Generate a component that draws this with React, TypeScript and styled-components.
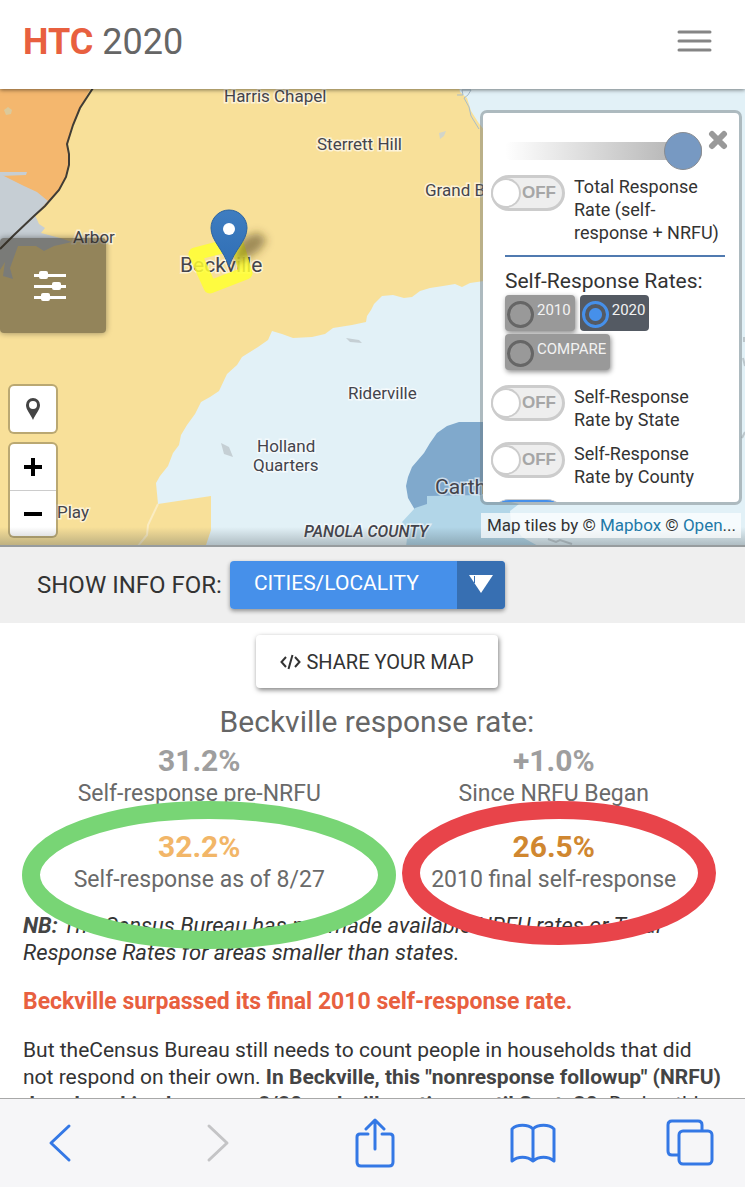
import React from "react";
import styled, { createGlobalStyle } from "styled-components";

const GlobalStyle = createGlobalStyle`
  *, *::before, *::after { box-sizing: border-box; }
  body { margin: 0; background: #fff; font-family: Roboto, "Liberation Sans", sans-serif; color: #333; }
  button, input, select { font: inherit; color: inherit; margin: 0; }
`;

const Page = styled.div`
  display: flex;
  flex-direction: column;
  height: 100vh;
  overflow: hidden;
`;

const Header = styled.header`
  display: flex;
  flex: none;
  align-items: center;
  justify-content: space-between;
  height: 89px;
  padding: 0 33px 6px 23px;
  background: #fff;
  box-shadow: 0 1px 4px rgba(0, 0, 0, 0.5);
  position: relative;
  z-index: 3;
`;

const Brand = styled.a`
  font-size: 36px;
  line-height: 40px;
  color: #666;
  text-decoration: none;
  strong { color: #e8603f; font-weight: 700; }
`;

const PlainButton = styled.button`
  display: flex;
  align-items: center;
  justify-content: center;
  padding: 0;
  border: 0;
  background: none;
  svg { display: block; }
`;

const MapArea = styled.section`
  position: relative;
  flex: none;
  height: 458px;
  overflow: hidden;
  background: #e2f1f7;
  border-bottom: 2px solid #979c9e;
`;

const MapCanvas = styled.svg`
  display: block;
  width: 100%;
  height: 100%;
  text { font-family: Roboto, "Liberation Sans", sans-serif; fill: #44444c; stroke: #fff; stroke-opacity: 0.6; stroke-width: 3px; paint-order: stroke; }
`;

const MapShade = styled.div`
  position: absolute;
  inset: auto 0 0 0;
  height: 18px;
  background: linear-gradient(rgba(60, 70, 75, 0), rgba(60, 70, 75, 0.3));
  pointer-events: none;
`;

const FilterButton = styled(PlainButton)`
  position: absolute;
  left: 0;
  top: 149px;
  width: 106px;
  height: 95px;
  padding-right: 6px;
  border-radius: 4px;
  background: rgba(46, 40, 27, 0.5);
  box-shadow: 0 0 6px rgba(0, 0, 0, 0.4);
`;

const MapControls = styled.div`
  position: absolute;
  left: 8px;
  top: 295px;
  display: flex;
  flex-direction: column;
  gap: 8px;
`;

const ControlGroup = styled.div`
  display: flex;
  flex-direction: column;
  width: 50px;
  border: 2px solid rgba(0, 0, 0, 0.25);
  border-radius: 6px;
  background: #fff;
  background-clip: padding-box;
`;

const ControlButton = styled(PlainButton)`
  height: 46px;
  & + & { border-top: 1px solid #ccc; }
`;

const Attribution = styled.div`
  position: absolute;
  right: 4px;
  bottom: 7px;
  width: 260px;
  padding: 0 6px;
  background: rgba(255, 255, 255, 0.7);
  font-size: 17px;
  line-height: 25px;
  white-space: nowrap;
  a { color: #2279a8; text-decoration: none; }
`;

const Panel = styled.aside`
  position: absolute;
  top: 21px;
  right: 3px;
  width: 262px;
  height: 395px;
  padding: 0 14px 0 22px;
  overflow: hidden;
  border: 3px solid rgba(100, 110, 115, 0.42);
  border-radius: 7px;
  background: #fff;
  background-clip: padding-box;
`;

const PanelTop = styled.div`
  display: flex;
  align-items: flex-start;
  gap: 6px;
  padding: 17px 0 5px;
  margin-right: -3px;
`;

const Opacity = styled.input`
  appearance: none;
  flex: 1;
  min-width: 0;
  height: 38px;
  margin-top: 2px;
  background: none;
  &::-webkit-slider-runnable-track {
    height: 18px;
    border-radius: 6px;
    background: linear-gradient(90deg, #fff, #aaa);
  }
  &::-webkit-slider-thumb {
    appearance: none;
    width: 38px;
    height: 38px;
    margin-top: -10px;
    border: 1px solid #888c92;
    border-radius: 50%;
    background: #7799c2;
  }
`;

const LayerRow = styled.label`
  display: flex;
  align-items: flex-start;
  gap: 9px;
  margin-left: -14px;
  padding-bottom: 11px;
  font-size: 18px;
  line-height: 23px;
`;

const LayerName = styled.span`
  white-space: pre-line;
`;

const Switch = styled.span`
  position: relative;
  flex: none;
  width: 74px;
  height: 36px;
  color: #a6a6a6;
  font-family: "Liberation Sans", Arial, sans-serif;
  font-size: 17px;
  font-weight: 700;
  line-height: 35px;
  input {
    appearance: none;
    position: absolute;
    inset: 0;
    border: 3px solid #ccc;
    border-radius: 18px;
    background: #eee;
  }
  input::before {
    content: "";
    position: absolute;
    left: -1px;
    top: 2px;
    width: 26px;
    height: 26px;
    border-radius: 50%;
    background: #fff;
    box-shadow: 0 0 0 2px #ccc;
  }
  input:checked { border-width: 1px; background: #4690ea; }
  input:checked::before { left: 43px; top: 4px; }
  span { position: absolute; left: 31px; }
`;

const Rule = styled.hr`
  margin: 0 0 11px;
  border: 0;
  border-top: 2px solid #507ab0;
`;

const YearSet = styled.fieldset`
  display: flex;
  flex-wrap: wrap;
  gap: 3px 5px;
  margin: 0 -10px 15px 0;
  padding: 0;
  border: 0;
  legend { padding: 0; font-size: 21px; line-height: 27px; }
`;

const YearOption = styled.label`
  display: flex;
  gap: 3px;
  height: 36px;
  padding: 5px 4px 0 2px;
  border-radius: 4px;
  background: #999;
  color: #f2f2f2;
  font-size: 15px;
  line-height: 20px;
  box-shadow: 1px 2px 5px rgba(0, 0, 0, 0.45);
  input {
    appearance: none;
    width: 27px;
    height: 27px;
    margin-top: 1px;
    border: 3px solid #666;
    border-radius: 50%;
  }
  &:has(:checked) { background: #545a63; box-shadow: none; }
  input:checked { border-color: #4690ea; background: radial-gradient(circle, #4690ea 6px, transparent 7px); }
`;

const InfoBar = styled.form`
  display: flex;
  flex: none;
  align-items: center;
  gap: 8px;
  height: 76px;
  padding-left: 37px;
  background: #efefef;
  label { font-size: 24px; line-height: 30px; }
`;

const SelectBox = styled.div`
  position: relative;
  display: flex;
  width: 275px;
  height: 48px;
  border-radius: 4px;
  overflow: hidden;
  background: #4690ea;
  color: #fff;
  select {
    appearance: none;
    width: 100%;
    padding: 0 54px 4px 24px;
    border: 0;
    background: none;
    font-size: 21px;
  }
  svg { position: absolute; right: 0; top: 0; pointer-events: none; }
`;

const SelectShadow = styled.div`
  border-radius: 4px;
  box-shadow: 0 2px 4px rgba(0, 0, 0, 0.4);
`;

const Content = styled.main`
  display: flex;
  flex: 1;
  flex-direction: column;
  min-height: 0;
  overflow: hidden;
  padding: 12px 14px 0 23px;
`;

const ShareButton = styled.button`
  display: flex;
  align-items: center;
  align-self: center;
  flex: none;
  gap: 5px;
  height: 53px;
  padding: 0 24px;
  border: 0;
  border-radius: 4px;
  background: #fff;
  box-shadow: 1px 2px 5px rgba(0, 0, 0, 0.5);
  font-size: 20px;
`;

const Title = styled.h1`
  margin: 16px 0 4px;
  font-size: 30px;
  line-height: 36px;
  font-weight: 400;
  text-align: center;
  color: #666;
`;

const Stats = styled.dl`
  display: grid;
  grid-template-columns: 1fr 1fr;
  row-gap: 20px;
  margin: 0 0 16px -1px;
  text-align: center;
`;

const Stat = styled.div`
  position: relative;
  display: flex;
  flex-direction: column-reverse;
`;

const StatValue = styled.dd<{ $tone: string }>`
  margin: 0;
  color: ${(p) => p.$tone};
  font-size: 30px;
  font-weight: 700;
  line-height: 34px;
`;

const StatLabel = styled.dt`
  color: #6a6a6a;
  font-size: 23px;
  line-height: 32px;
`;

const Ring = styled.svg<{ $left: number }>`
  position: absolute;
  z-index: 2;
  left: ${(p) => p.$left}px;
  top: -29px;
  pointer-events: none;
`;

const Text = styled.p`
  margin: 0 0 22px;
  font-size: 21px;
  line-height: 27px;
  color: #333;
  b { color: #444; }
`;

const Note = styled(Text)`
  font-size: 22px;
  font-style: italic;
`;

const Highlight = styled(Text)`
  color: #e8603f;
  font-size: 23px;
  font-weight: 700;
`;

const Toolbar = styled.nav`
  display: flex;
  flex: none;
  justify-content: space-between;
  height: 89px;
  padding: 16px 31px 0 36px;
  border-top: 1px solid #a8a8a8;
  background: #f6f6f8;
  position: relative;
  z-index: 3;
`;

const ToolButton = styled(PlainButton)`
  width: 48px;
  height: 55px;
  color: #3478e5;
  &:disabled { color: #c4c4c6; }
`;

function LayerToggle({ name, on }: { name: string; on?: boolean }) {
  return (
    <LayerRow>
      <Switch>
        <input type="checkbox" defaultChecked={on} />
        {!on && <span>OFF</span>}
      </Switch>
      <LayerName>{name}</LayerName>
    </LayerRow>
  );
}

function CountyMap() {
  return (
    <MapCanvas viewBox="0 89 745 456" preserveAspectRatio="xMinYMin slice" role="img" aria-label="Map of Panola County">
      <path
        fill="#f8e099"
        d="M0 80H458L460 92 467 98 471 111 478 122 484 130V281L470 283 462 287 455 284 443 286 430 288 420 291 412 297 404 298 393 295 382 296 374 304 371 310 367 316 366 322 352 325 333 328 325 334 312 337 293 338 282 334 272 331 268 340 258 347 242 357 237 365 227 374 219 391 210 397 201 402 195 414 187 425 181 435 179 445 173 453 168 466 160 476 156 483 158 504 211 496 211 530 205 548H0Z"
      />
      <path fill="none" stroke="#fff" strokeOpacity=".4" strokeWidth="2" d="M158 504 148 525 147 535 138 546" />
      <path fill="#f4b76e" d="M0 80H95L80 108 73 125 68 145 69 165 66 178 58 192 34 216 0 240Z" />
      <path fill="#c6ced4" d="M0 174 12 180 24 186 37 192 48 201 35 215 39 224 45 228 41 233 60 238 72 242 54 246 44 251 36 246 18 246 14 257 10 268 13 279 3 276 5 262 0 270Z" />
      <path fill="#c6ced4" d="M0 172 27 172 26 175 0 176Z" />
      <path fill="#dcc99a" d="M4 110l4-3 4 3-1 4-5 1Z" />
      <path fill="none" stroke="#403c35" strokeWidth="2" d="M93 88 80 108 73 125 67 144 69 154 69 165 66 177 59 190 45 206 34 216 14 235 0 249" />
      <path fill="none" stroke="#a9bdca" d="M457 95h6l-1-5h9l-3 5-4 3 5 9 2 9 8 13" />
      <path fill="#d2d5c9" d="M439 133l7-2-2 5-4 3Z" />
      <path fill="#c5cfd4" d="M346 338l13 2 3 3-12-1ZM221 443l8 4 4 10-9-3Z" />
      <path fill="#80a9cc" d="M415 510 408 498 406 486 408 477 412 467 424 453 430 443 437 433 447 426 459 422H484V500L427 505Z" />
      <path fill="#b2d6e8" d="M415 508 427 504 427 496 482 495 519 504 510 511 511 522 522 537 540 547H406L408 530 402 522Z" />
      <path fill="none" stroke="#bcc7cc" strokeWidth="2" d="M548 539l8 3 4-2 12 4M744 337v5M743 358l2 8M742 438l3-6" />
      <g fontSize="17">
        <text x="224" y="102">Harris Chapel</text>
        <text x="317" y="150">Sterrett Hill</text>
        <text x="425" y="196">Grand Bluff</text>
        <text x="73" y="243">Arbor</text>
        <text x="348" y="399">Riderville</text>
        <text x="257" y="452">Holland</text>
        <text x="253" y="471">Quarters</text>
        <text x="57" y="518">Play</text>
        <text x="435" y="494" fontSize="21">Carthage</text>
        <text x="304" y="537" fontSize="16" fontWeight="500" fontStyle="italic">PANOLA COUNTY</text>
        <text x="180" y="272" fontSize="21">Beckville</text>
      </g>
      <path fill="none" stroke="#ffff30" strokeOpacity=".85" strokeWidth="13" strokeLinejoin="round" d="M195 254 237 243 246 273 210 287Z" />
      <defs>
        <linearGradient id="pin" x2="0" y2="1">
          <stop stopColor="#3f7dc0" />
          <stop offset="1" stopColor="#2f6eb5" />
        </linearGradient>
        <filter id="soft" x="-50%" y="-50%" width="200%" height="200%">
          <feGaussianBlur stdDeviation="4" />
        </filter>
      </defs>
      <path fill="#453a10" fillOpacity=".5" filter="url(#soft)" d="M231 266 241 239 258 232 267 240 258 252Z" />
      <path fill="url(#pin)" stroke="#2d64a0" d="M229 267C224 250 211 241 211 228A18 18 0 0 1 247 228C247 241 234 250 229 267Z" />
      <circle cx="229" cy="229" r="6" fill="#fff" />
    </MapCanvas>
  );
}

export default function App() {
  return (
    <>
      <GlobalStyle />
      <Page>
        <Header>
          <Brand href="#"><strong>HTC</strong> 2020</Brand>
          <PlainButton aria-label="Menu">
            <svg width="35" height="24" viewBox="0 0 35 24" fill="none" stroke="#858585" strokeWidth="3" strokeLinecap="round">
              <path d="M2 2H33M2 11H33M2 20H33" />
            </svg>
          </PlainButton>
        </Header>

        <MapArea>
          <CountyMap />
          <FilterButton aria-label="Map layers">
            <svg width="34" height="32" viewBox="0 0 34 32" fill="#fff">
              <path d="M1 4H33V7H1ZM1 15H33V18H1ZM1 26H33V29H1Z" />
              <rect x="6" y="1" width="9" height="8" rx="2" />
              <rect x="19" y="12" width="9" height="8" rx="2" />
              <rect x="8" y="23" width="9" height="8" rx="2" />
            </svg>
          </FilterButton>
          <MapControls>
            <ControlGroup>
              <ControlButton aria-label="My location">
                <svg width="16" height="24" viewBox="0 0 16 24" fill="#444" fillRule="evenodd">
                  <path d="M8 1A7 7 0 0 1 15 8C15 13 11 16 8 23 5 16 1 13 1 8A7 7 0 0 1 8 1ZM8 4A4 4 0 1 0 8 12A4 4 0 1 0 8 4Z" />
                </svg>
              </ControlButton>
            </ControlGroup>
            <ControlGroup>
              <ControlButton aria-label="Zoom in">
                <svg width="18" height="18" viewBox="0 0 18 18" stroke="#000" strokeWidth="4"><path d="M0 9H18M9 0V18" /></svg>
              </ControlButton>
              <ControlButton aria-label="Zoom out">
                <svg width="18" height="18" viewBox="0 0 18 18" stroke="#000" strokeWidth="4"><path d="M0 9H18" /></svg>
              </ControlButton>
            </ControlGroup>
          </MapControls>
          <MapShade />
          <Attribution>
            Map tiles by © <a href="#">Mapbox</a> © <a href="#">Open</a>...
          </Attribution>
          <Panel>
            <PanelTop>
              <Opacity type="range" aria-label="Layer opacity" min={0} max={100} defaultValue={100} />
              <PlainButton aria-label="Close">
                <svg width="20" height="20" viewBox="0 0 20 20" stroke="#999" strokeWidth="6" strokeLinecap="round">
                  <path d="M4 4 16 16M16 4 4 16" />
                </svg>
              </PlainButton>
            </PanelTop>
            <LayerToggle name={"Total Response\nRate (self-\nresponse + NRFU)"} />
            <Rule />
            <YearSet>
              <legend>Self-Response Rates:</legend>
              <YearOption><input type="radio" name="year" />2010</YearOption>
              <YearOption><input type="radio" name="year" defaultChecked />2020</YearOption>
              <YearOption><input type="radio" name="year" />COMPARE</YearOption>
            </YearSet>
            <LayerToggle name={"Self-Response\nRate by State"} />
            <LayerToggle name={"Self-Response\nRate by County"} />
            <LayerToggle name={"Self-Response\nRate by Tract"} on />
          </Panel>
        </MapArea>

        <InfoBar>
          <label htmlFor="geo">SHOW INFO FOR:</label>
          <SelectShadow>
            <SelectBox>
              <select id="geo" defaultValue="city">
                <option value="city">CITIES/LOCALITY</option>
              </select>
              <svg width="48" height="48" viewBox="0 0 48 48">
                <path fill="#376fb2" d="M0 0H48V48H0Z" />
                <path fill="#fff" d="M12 14H36L24 32Z" />
                <path stroke="#376fb2" d="M17.500 15V22" />
              </svg>
            </SelectBox>
          </SelectShadow>
        </InfoBar>

        <Content>
          <ShareButton>
            <svg width="21" height="18" viewBox="0 0 21 18" fill="none" stroke="#333" strokeWidth="2">
              <path d="M6 4 1.500 9 6 14M15 4 19.500 9 15 14M12.500 2 8.500 16" />
            </svg>
            SHARE YOUR MAP
          </ShareButton>
          <Title>Beckville response rate:</Title>
          <Stats>
            <Stat>
              <StatLabel>Self-response pre-NRFU</StatLabel>
              <StatValue $tone="#9e9e9e">31.2%</StatValue>
            </Stat>
            <Stat>
              <StatLabel>Since NRFU Began</StatLabel>
              <StatValue $tone="#9e9e9e">+1.0%</StatValue>
            </Stat>
            <Stat>
              <StatLabel>Self-response as of 8/27</StatLabel>
              <StatValue $tone="#f2b668">32.2%</StatValue>
              <Ring $left={0} width="374" height="148" viewBox="0 0 374 148" aria-hidden="true">
                <ellipse cx="187" cy="74" rx="178" ry="65" fill="none" stroke="#78d575" strokeWidth="18" />
              </Ring>
            </Stat>
            <Stat>
              <StatLabel>2010 final self-response</StatLabel>
              <StatValue $tone="#d08730">26.5%</StatValue>
              <Ring $left={25} width="314" height="144" viewBox="0 0 314 144" aria-hidden="true">
                <ellipse cx="157" cy="72" rx="148" ry="63" fill="none" stroke="#e8444a" strokeWidth="18" />
              </Ring>
            </Stat>
          </Stats>
          <Note>
            <b>NB:</b> The Census Bureau has not made available NRFU rates or Total Response Rates for areas smaller than states.
          </Note>
          <Highlight>Beckville surpassed its final 2010 self-response rate.</Highlight>
          <Text>
            But theCensus Bureau still needs to count people in households that did
            <br />
            not respond on their own. <b>In Beckville, this "nonresponse followup" (NRFU)</b>
            <br />
            <b>door-knocking began on 8/20 and will continue until Sept. 30.</b> During this
          </Text>
        </Content>

        <Toolbar aria-label="Browser">
          <ToolButton aria-label="Back">
            <svg width="26" height="40" viewBox="0 0 26 40" fill="none" stroke="currentColor" strokeWidth="3" strokeLinecap="round" strokeLinejoin="round">
              <path d="M22 3 4 20 22 37" />
            </svg>
          </ToolButton>
          <ToolButton aria-label="Forward" disabled>
            <svg width="26" height="40" viewBox="0 0 26 40" fill="none" stroke="currentColor" strokeWidth="3" strokeLinecap="round" strokeLinejoin="round">
              <path d="M4 3 22 20 4 37" />
            </svg>
          </ToolButton>
          <ToolButton aria-label="Share">
            <svg width="40" height="50" viewBox="0 0 40 50" fill="none" stroke="currentColor" strokeWidth="3" strokeLinecap="round" strokeLinejoin="round">
              <path d="M13 16H5Q2 16 2 19V44Q2 48 6 48H34Q38 48 38 44V19Q38 16 35 16H27M20 31V3M11 11 20 2 29 11" />
            </svg>
          </ToolButton>
          <ToolButton aria-label="Bookmarks">
            <svg width="46" height="40" viewBox="0 0 46 40" fill="none" stroke="currentColor" strokeWidth="3" strokeLinecap="round" strokeLinejoin="round">
              <path d="M23 6C18 1 7 1 2 6V38C8 33 17 33 23 38 29 33 38 33 44 38V6C39 1 28 1 23 6ZM23 6V38" />
            </svg>
          </ToolButton>
          <ToolButton aria-label="Tabs">
            <svg width="48" height="48" viewBox="0 0 48 48" fill="none" stroke="currentColor" strokeWidth="3" strokeLinejoin="round">
              <path d="M12 36H6Q2 36 2 32V6Q2 2 6 2H32Q36 2 36 6V12" />
              <rect x="13" y="12" width="33" height="33" rx="4" />
            </svg>
          </ToolButton>
        </Toolbar>
      </Page>
    </>
  );
}
